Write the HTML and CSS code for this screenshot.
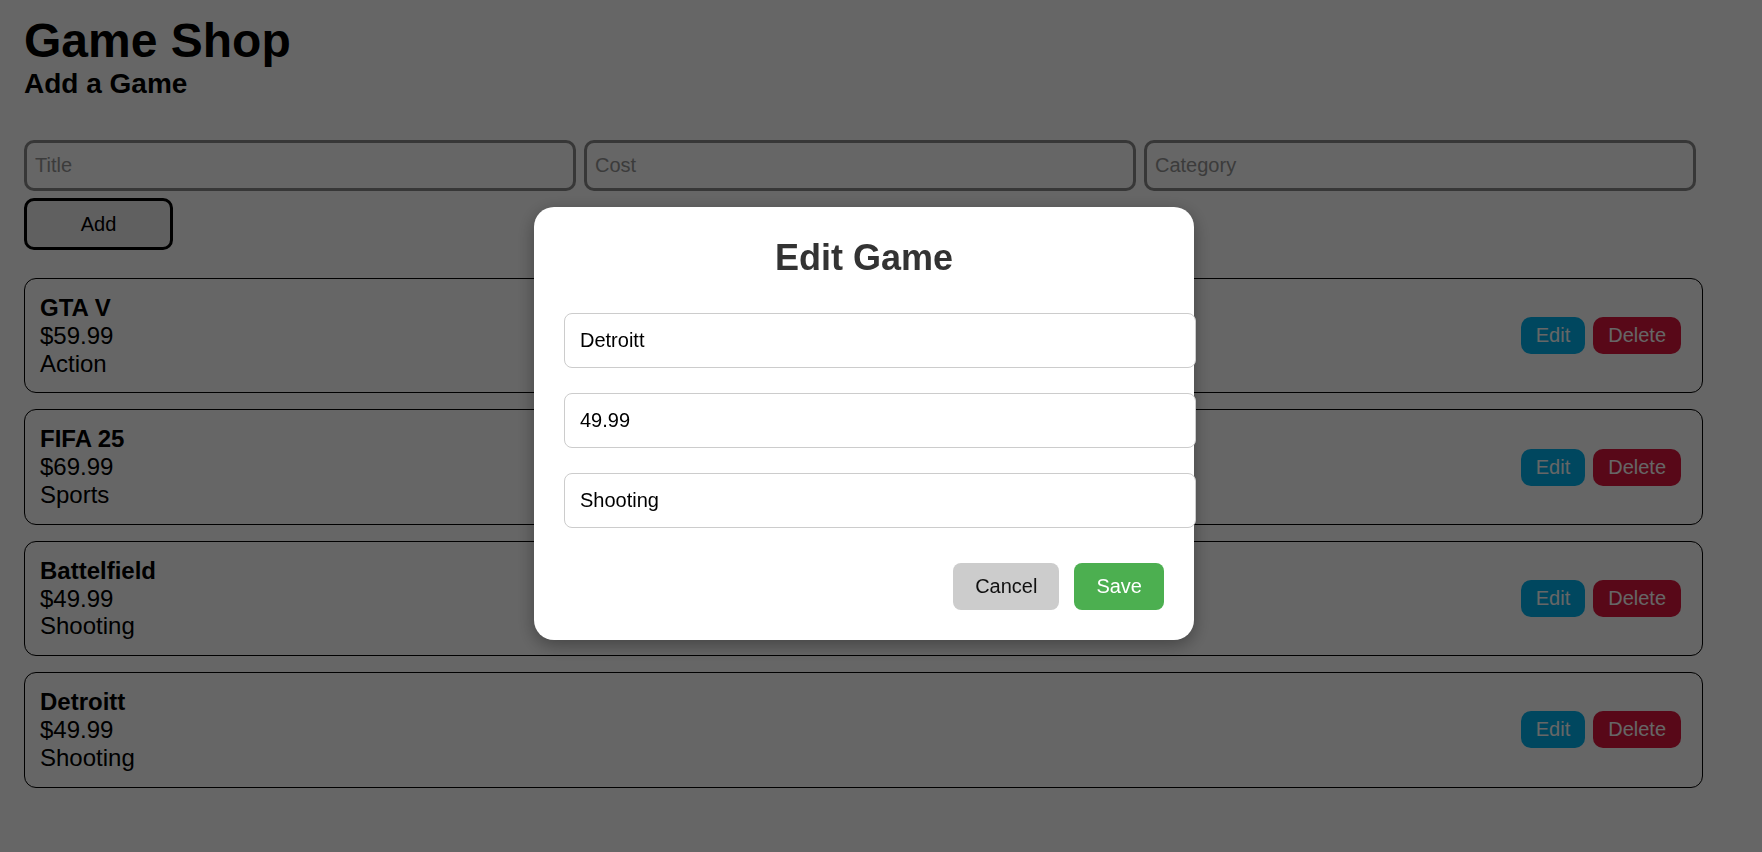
FILE: index.html
```html
<!DOCTYPE html>
<html lang="en">
<head>
<meta charset="utf-8">
<title>Game Shop</title>
<link rel="stylesheet" href="styles.css">
</head>
<body>
<div class="page">
  <h1 class="title">Game Shop</h1>
  <h2 class="subtitle">Add a Game</h2>
  <div class="add-row">
    <input class="add-input" type="text" placeholder="Title">
    <input class="add-input" type="text" placeholder="Cost">
    <input class="add-input" type="text" placeholder="Category">
  </div>
  <button class="add-btn">Add</button>

  <div class="list">
    <div class="card">
      <div class="info">
        <div class="name">GTA V</div>
        <div>$59.99</div>
        <div>Action</div>
      </div>
      <div class="actions">
        <button class="btn edit">Edit</button>
        <button class="btn delete">Delete</button>
      </div>
    </div>
    <div class="card">
      <div class="info">
        <div class="name">FIFA 25</div>
        <div>$69.99</div>
        <div>Sports</div>
      </div>
      <div class="actions">
        <button class="btn edit">Edit</button>
        <button class="btn delete">Delete</button>
      </div>
    </div>
    <div class="card">
      <div class="info">
        <div class="name">Battelfield</div>
        <div>$49.99</div>
        <div>Shooting</div>
      </div>
      <div class="actions">
        <button class="btn edit">Edit</button>
        <button class="btn delete">Delete</button>
      </div>
    </div>
    <div class="card">
      <div class="info">
        <div class="name">Detroitt</div>
        <div>$49.99</div>
        <div>Shooting</div>
      </div>
      <div class="actions">
        <button class="btn edit">Edit</button>
        <button class="btn delete">Delete</button>
      </div>
    </div>
  </div>
</div>

<div class="overlay">
  <div class="modal">
    <h2 class="modal-title">Edit Game</h2>
    <input class="modal-input" type="text" value="Detroitt">
    <input class="modal-input" type="text" value="49.99">
    <input class="modal-input" type="text" value="Shooting">
    <div class="modal-actions">
      <button class="mbtn cancel">Cancel</button>
      <button class="mbtn save">Save</button>
    </div>
  </div>
</div>
</body>
</html>
```
FILE: styles.css
```css
* { box-sizing: border-box; }

html, body {
  margin: 0;
  background: #ffffff;
  font-family: "Liberation Sans", Arial, sans-serif;
  color: #000;
}

.page {
  padding: 13px 24px 40px 24px;
}

.title {
  margin: 0;
  font-size: 48px;
  font-weight: bold;
  line-height: normal;
}

.subtitle {
  margin: 0;
  font-size: 28px;
  font-weight: bold;
  line-height: normal;
}

.add-row {
  display: flex;
  gap: 8px;
  margin-top: 40px;
}

.add-input {
  width: 552px;
  height: 51px;
  padding: 11px 8px;
  border: 3px solid #8a8a8a;
  border-radius: 10px;
  font-family: "Liberation Sans", Arial, sans-serif;
  font-size: 20px;
  background: #fff;
  color: #000;
}

.add-input::placeholder {
  color: #959595;
}

.add-btn {
  display: block;
  margin-top: 7px;
  width: 149px;
  height: 52px;
  border: 3px solid #000;
  border-radius: 10px;
  background: #efefef;
  font-family: "Liberation Sans", Arial, sans-serif;
  font-size: 20px;
  color: #000;
}

.list {
  margin-top: 28px;
  display: flex;
  flex-direction: column;
  gap: 16px;
  width: 1679px;
}

.card {
  display: flex;
  align-items: center;
  justify-content: space-between;
  border: 1px solid #000;
  border-radius: 12px;
  padding: 15px 21px 15px 15px;
  font-size: 24px;
  line-height: 27.8px;
}

.name {
  font-weight: bold;
}

.actions {
  display: flex;
  gap: 8px;
}

.btn {
  border: none;
  border-radius: 10px;
  padding: 7px 15px;
  font-family: "Liberation Sans", Arial, sans-serif;
  font-size: 20px;
  line-height: 23px;
  color: #fff;
}

.btn.edit { background: #00b2ee; }
.btn.delete { background: #dc143c; }

.overlay {
  position: fixed;
  inset: 0;
  background: rgba(0, 0, 0, 0.6);
  display: flex;
  align-items: center;
  justify-content: center;
  padding-right: 34px;
  padding-bottom: 5px;
}

.modal {
  width: 660px;
  padding: 30px;
  background: #fff;
  border-radius: 20px;
  box-shadow: 0 5px 18px rgba(0, 0, 0, 0.35);
}

.modal-title {
  margin: 0 0 35px 0;
  text-align: center;
  font-size: 36px;
  font-weight: bold;
  color: #333;
  line-height: 41px;
}

.modal-input {
  display: block;
  box-sizing: content-box;
  width: 100%;
  padding: 15px;
  margin: 0 0 25px 0;
  border: 1px solid #ccc;
  border-radius: 8px;
  font-family: "Liberation Sans", Arial, sans-serif;
  font-size: 20px;
  line-height: 23px;
  height: 23px;
  color: #000;
  background: #fff;
}

.modal-actions {
  display: flex;
  justify-content: flex-end;
  gap: 15px;
  margin-top: 35px;
}

.mbtn {
  border: none;
  border-radius: 8px;
  padding: 12px 22px;
  font-family: "Liberation Sans", Arial, sans-serif;
  font-size: 20px;
  line-height: 23px;
}

.mbtn.cancel { background: #ccc; color: #111; }
.mbtn.save { background: #4caf50; color: #fff; }
```
